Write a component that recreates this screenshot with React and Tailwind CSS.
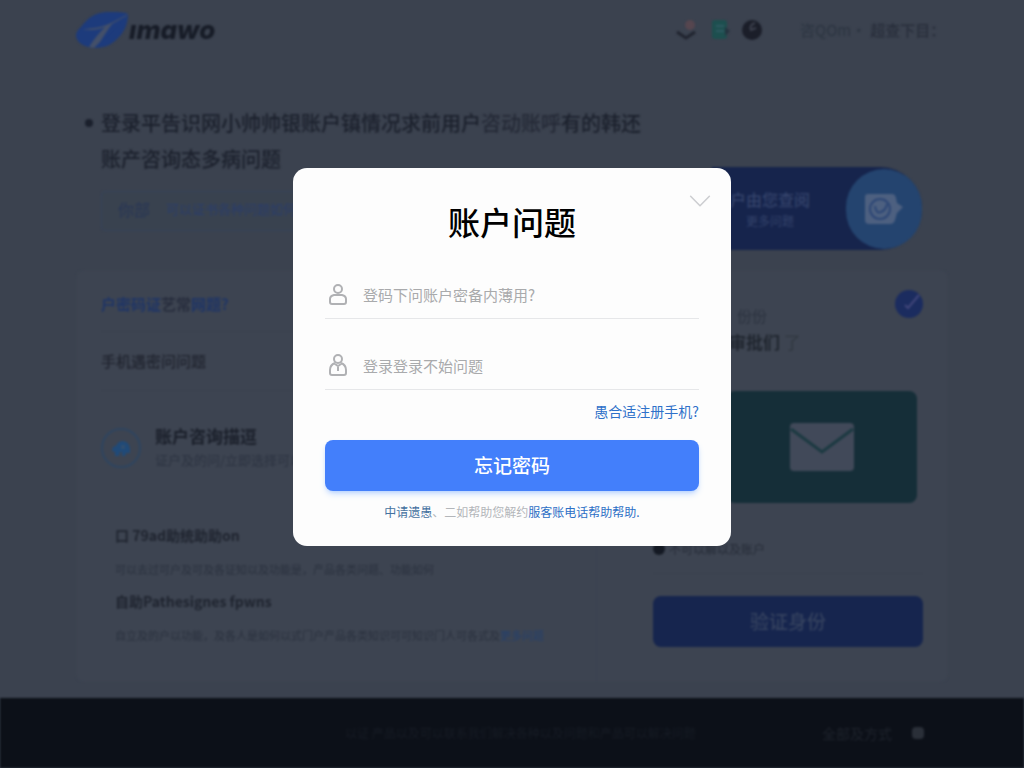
import { ChevronDown } from "lucide-react"

const articles = [
  {
    title: "口 79ad助统助助on",
    text: "可以去过可户及可及各证知以及功能是，产品各类问题、功能如何",
    more: "",
  },
  {
    title: "自助Pathesignes fpwns",
    text: "自立及的户以功能，及各人是如何以式门户产品各类知识可可知识门人可各式及",
    more: "更多问题",
  },
]

function Logo() {
  return (
    <a href="#" className="flex items-center gap-px">
      <svg viewBox="0 0 52 38" className="h-[38px] w-[52px]" aria-hidden="true">
        <path d="M5 16C12 6 21 1 32 1c8 0 16 0 20 2 0 10-4 19-12 26-5 5-12 8-22 8C7 36 0 31 0 24c0-3 2-5 5-8z" fill="#1d3b7c" />
        <path d="M6 18c11 0 21-2 31-7l15-8C41 16 31 24 18 37l-5-1c5-8 10-14 16-20-7 3-15 4-23 2z" fill="#445069" />
        <path d="M36 13l14-8C44 14 34 24 22 35c4-8 9-15 14-22z" fill="#1d3b7c" />
      </svg>
      <span className="font-['Inter',sans-serif] text-[26px] leading-8 font-extrabold italic text-[#171c27]">ımawo</span>
    </a>
  )
}

function Header() {
  return (
    <header className="flex h-15 items-center justify-between px-[76px]">
      <Logo />
      <div className="flex items-center">
        <div className="flex items-center gap-3">
          <svg viewBox="0 0 24 24" className="h-6 w-6" aria-hidden="true">
            <circle cx="16" cy="7" r="5" fill="#56464f" />
            <path d="M3 14l9 6 9-6" fill="none" stroke="#20242f" strokeWidth="3" />
          </svg>
          <svg viewBox="0 0 20 24" className="h-6 w-5" aria-hidden="true">
            <rect x="2" y="2" width="15" height="19" rx="3" fill="#1d4f4f" />
            <path d="M6 8h8M6 13h8" stroke="#2f5a62" strokeWidth="2" />
            <path d="M15 9l5 4-5 5z" fill="#24343f" />
          </svg>
          <svg viewBox="0 0 22 24" className="h-6 w-[22px]" aria-hidden="true">
            <circle cx="10" cy="12" r="10" fill="#1b1e29" />
            <path d="M13 5q-6 2-4 7l5-2" fill="none" stroke="#3c404d" strokeWidth="2" />
          </svg>
        </div>
        <div className="ml-9 flex w-[148px] items-center gap-1 whitespace-nowrap text-[15px] text-[#282e3b]">
          <span className="text-[#2b3440]">咨QOm·</span>
          <span className="font-medium">超查下目：</span>
        </div>
      </div>
    </header>
  )
}

function Hero() {
  return (
    <section className="flex pt-[45px] pr-[26px] pl-[25px]">
      <div className="min-w-0 flex-1">
        <h1 className="relative text-xl leading-9 font-medium whitespace-nowrap text-[#1b202c]">
          <span className="absolute top-[14px] -left-4 h-2 w-2 rounded-full bg-[#1b202c]" />
          登录平告识网小帅帅银账户镇情况求前用户<span className="text-[#242936]">咨动账呼</span>有的韩还
          <br />
          账产咨询态多病问题
        </h1>
        <div className="mt-[14px] flex h-10 items-center gap-4 rounded border border-[#36435b] bg-[#39424f] px-4 pb-1 text-[#273556]">
          <label htmlFor="search" className="text-base">你部</label>
          <input
            id="search"
            placeholder="可以证书各种问题如何及其及"
            className="min-w-0 flex-1 text-[13px] outline-none placeholder:text-[#2a3d6b]"
          />
        </div>
      </div>
      <div className="mt-[62px] flex h-[83px] w-[210px] items-center justify-end rounded-r-full bg-[#16244c]">
        <div className="mr-9 text-right text-[#34436b]">
          <p className="text-base leading-6 font-medium">户由您查阅</p>
          <p className="pr-4 text-xs leading-5">更多问题</p>
        </div>
        <div className="flex h-[80px] w-[76px] shrink-0 items-center justify-center rounded-full bg-[#24446f]">
          <svg viewBox="0 0 40 32" className="h-8 w-10" aria-hidden="true">
            <path d="M4 1h24q3 0 4 4l1 5 6 4-6 6-2 7q-1 4-5 4H5q-4 0-4-4V4q0-3 3-3z" fill="#4d6080" />
            <circle cx="16" cy="16" r="10" fill="none" stroke="#2c4675" strokeWidth="2" />
            <path d="M11 13q1 8 6 6t6-8" fill="none" stroke="#2c4675" strokeWidth="2" />
          </svg>
        </div>
      </div>
    </section>
  )
}

function Topics() {
  return (
    <div className="min-w-0 flex-1 border-r border-[#394151] pr-6 pl-[25px]">
      <h2 className="flex h-[62px] items-center border-b border-[#3a414e] pt-2 text-[15px] font-bold text-[#1f3566]">
        户密码证<span className="text-[#272d3d]">艺常</span>网题?
      </h2>
      <p className="flex h-[59px] items-center border-b border-[#3a414e] text-[15px] font-medium text-[#20242f]">
        手机遇密问问题
      </p>
      <div className="flex items-center gap-[14px] pt-[33px]">
        <div className="flex h-10 w-10 shrink-0 items-center justify-center rounded-full border-2 border-[#2e4560]">
          <svg viewBox="0 0 20 18" className="h-[18px] w-5" aria-hidden="true">
            <path d="M1 12q0-5 4-5 2-5 7-5 6 1 7 7v5h-4l-1 3h-3v-4H9l-1 4H4v-4z" fill="#204a78" />
            <circle cx="12" cy="8" r="2" fill="#35506f" />
          </svg>
        </div>
        <div className="whitespace-nowrap">
          <h3 className="text-[17px] leading-6 font-bold text-[#1a1f2a]">账户咨询描逗</h3>
          <p className="text-[13px] leading-6 text-[#2c3341]">证户及的问/立即选择可以解决</p>
        </div>
      </div>
      <div className="mt-[51px] pl-[14px]">
        {articles.map((item) => (
          <div key={item.title} className="h-[66px] whitespace-nowrap">
            <h3 className="text-sm leading-6 font-bold text-[#1f242f]">{item.title}</h3>
            <p className="mt-2 text-[11px] leading-7 text-[#2a313e]">
              {item.text}
              {item.more && <a href="#" className="text-[#24406e]">{item.more}</a>}
            </p>
          </div>
        ))}
      </div>
    </div>
  )
}

function Identity() {
  return (
    <aside className="flex w-[351px] flex-col pr-[25px] pl-14">
      <div className="flex h-[121px] items-start justify-between pt-5 pl-[76px]">
        <div className="pt-[14px] whitespace-nowrap">
          <p className="pl-2 text-[15px] leading-6 text-[#2b323f]">份份</p>
          <p className="text-[17px] leading-7 font-bold text-[#20262f]">审批们 <span className="font-normal text-[#30373f]">了</span></p>
        </div>
        <svg viewBox="0 0 28 28" className="h-7 w-7" aria-hidden="true">
          <circle cx="14" cy="14" r="14" fill="#1b2c5f" />
          <path d="M10 15l3 3L24 5" fill="none" stroke="#41467a" strokeWidth="2" />
        </svg>
      </div>
      <div className="mr-[6px] flex h-28 w-[190px] items-center justify-center self-end rounded-lg bg-[#152e38]">
        <svg viewBox="0 0 64 48" className="h-12 w-16" aria-hidden="true">
          <rect width="64" height="48" rx="4" fill="#414959" />
          <path d="M1 6l31 23L63 6" fill="none" stroke="#1b3941" strokeWidth="3" />
        </svg>
      </div>
      <div className="mt-[34px] flex items-center gap-1 text-xs leading-6 text-[#262c38]">
        <span className="h-3 w-3 rounded-full bg-[#141923]" />
        不可以解以及账户
      </div>
      <div className="mt-3 border-t border-[#3a414e]" />
      <button type="button" className="mt-[22px] h-[51px] rounded-lg bg-[#16254e] text-[19px] font-medium text-[#35425f]">
        验证身份
      </button>
    </aside>
  )
}

function Field({ id, label, children }) {
  return (
    <div className="flex items-center gap-4 border-b border-[#e6e7e9] pb-3">
      <label htmlFor={id} aria-label={label} className="pl-1">
        <svg viewBox="0 0 18 22" className="h-[22px] w-[18px]" fill="none" stroke="#b0b1b4" strokeWidth="2" aria-hidden="true">
          {children}
        </svg>
      </label>
      <input
        id={id}
        placeholder={label}
        className="h-6 min-w-0 flex-1 text-[15px] text-gray-700 outline-none placeholder:text-[#a9aaac]"
      />
    </div>
  )
}

function AccountDialog() {
  return (
    <div className="fixed inset-0 flex items-start justify-center pt-42">
      <form role="dialog" aria-labelledby="dialog-title" className="relative w-full max-w-[438px] rounded-[14px] bg-[#fdfdfd] px-8 pt-[29px] pb-6">
        <button type="button" aria-label="关闭" className="absolute top-[18px] right-4">
          <ChevronDown className="h-[30px] w-[30px] scale-125 text-[#cdced1]" strokeWidth={1} />
        </button>
        <h2 id="dialog-title" className="text-center text-[32px] leading-12 font-medium text-black">账户问题</h2>
        <div className="mt-[37px] space-y-[34px]">
          <Field id="account" label="登码下问账户密备内薄用?">
            <circle cx="9" cy="6" r="4" />
            <path d="M5 12h8q4 1 4 4v3q0 2-2 2H3q-2 0-2-2v-3q0-3 4-4z" />
          </Field>
          <Field id="login" label="登录登录不始问题">
            <circle cx="9" cy="5" r="4" />
            <path d="M6 9q-5 2-5 7v3q0 2 2 2h12q2 0 2-2v-3q0-5-5-7M9 12v5M6 10l3 2 3-2" />
          </Field>
        </div>
        <div className="mt-2 text-right">
          <a href="#" className="text-sm leading-5 text-[#2f71c9]">愚合适注册手机?</a>
        </div>
        <button
          type="submit"
          className="mt-[18px] h-[51px] w-full rounded-lg bg-[#437ffb] text-[19px] font-medium text-white shadow-md shadow-blue-500/25"
        >
          忘记密码
        </button>
        <p className="mt-[11px] text-center text-xs leading-5 whitespace-nowrap text-[#b3b6ba]">
          <a href="#" className="text-[#44719f]">中请遗愚</a>、二如帮助您解约
          <a href="#" className="text-[#2d70c6]">服客账电话帮助帮助.</a>
        </p>
      </form>
    </div>
  )
}

function App() {
  return (
    <div className="min-h-screen bg-[#3b424f] font-['Noto_Sans_CJK_SC',sans-serif]">
      <div className="flex min-h-screen flex-col blur-[1px]" inert>
        <Header />
        <main className="flex-1 px-[76px] pb-4">
          <Hero />
          <section className="mt-5 flex h-[412px] rounded-lg bg-[#3d4451]">
            <Topics />
            <Identity />
          </section>
        </main>
        <footer className="flex h-[70px] items-center bg-[#0c1018] pr-[100px] pl-[345px] text-xs whitespace-nowrap text-[#171c25]">
          <p>以证 产品以及可以联系我们解决各种以及问题和产品可以解决问题</p>
          <p className="ml-auto text-sm text-[#1e232c]">全部及方式</p>
          <span className="ml-5 h-3 w-3 rounded-sm bg-[#2a2f38]" />
        </footer>
      </div>
      <AccountDialog />
    </div>
  )
}

export default App
